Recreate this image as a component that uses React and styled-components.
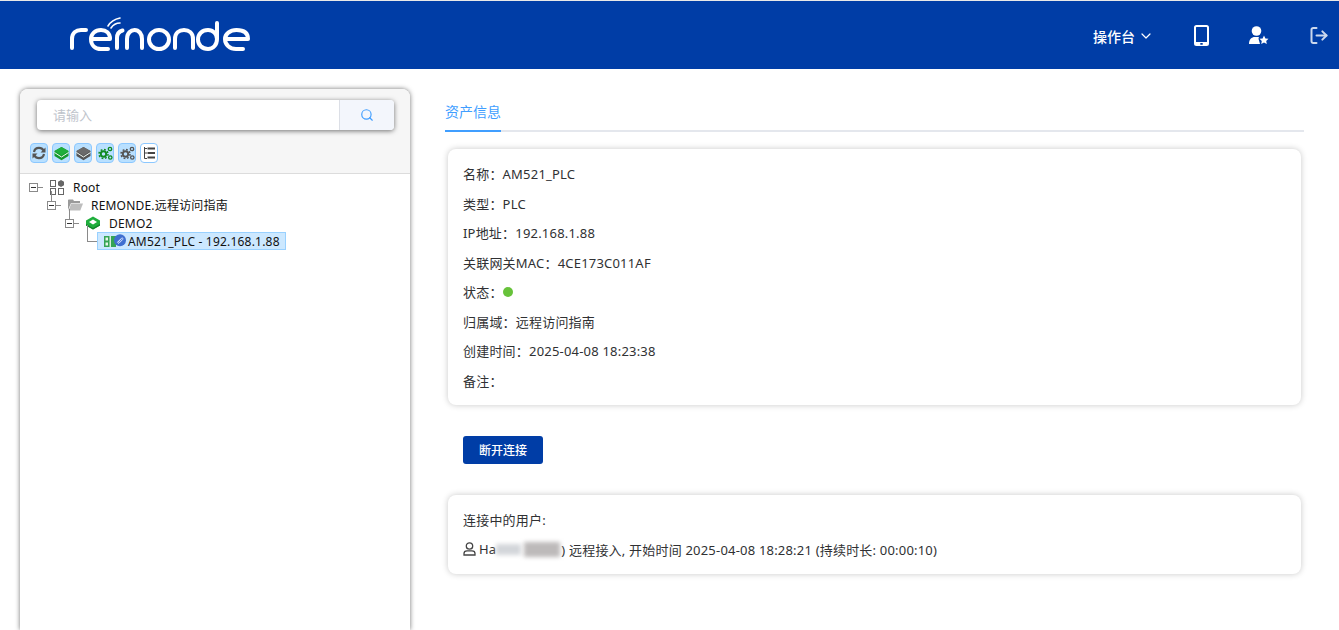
import React from 'react';
import styled, { createGlobalStyle } from 'styled-components';
import { ChevronDown, Search, LogOut } from 'lucide-react';

const GlobalStyle = createGlobalStyle`
  html, body {
    margin: 0;
    height: 100%;
    overflow: hidden;
    background: #fff;
    font-family: "Noto Sans", "Noto Sans CJK SC", sans-serif;
    color: #303133;
  }
`;

const HeaderBar = styled.header`
  display: flex;
  align-items: center;
  justify-content: space-between;
  height: 68px;
  border-top: 1px solid #e8e8e8;
  padding: 0 10px 0 68px;
  background: #003da6;
`;

const HeaderNav = styled.nav`
  display: flex;
  align-items: center;
  color: #fff;
`;

const NavMenu = styled.span`
  display: flex;
  align-items: center;
  gap: 3px;
  margin-right: 37px;
  padding-top: 2px;
  font-size: 14px;
  font-weight: 500;
`;

const NavIcon = styled.span`
  display: flex;
  width: 20px;
  justify-content: center;
  margin-left: ${p => p.$gap || 0}px;
  opacity: ${p => p.$dim ? 0.8 : 1};
`;

const Main = styled.main`
  display: flex;
  gap: 35px;
  padding: 20px 35px 0 20px;
`;

const TreePanel = styled.aside`
  flex: 0 0 390px;
  height: 541px;
  border-radius: 8px 8px 0 0;
  background: #fff;
  box-shadow: 0 0 5px rgba(0, 0, 0, 0.55);
  overflow: hidden;
`;

const PanelTop = styled.div`
  padding: 11px 16px 10px 10px;
  background: #f6f6f6;
  border-bottom: 1px solid #dcdcdc;
`;

const SearchBox = styled.div`
  display: flex;
  height: 30px;
  margin: 0 0 13px 7px;
  border-radius: 4px;
  background: #fff;
  box-shadow: 0 1px 5px rgba(0, 0, 0, 0.55);
  overflow: hidden;
`;

const SearchInput = styled.div`
  flex: 1;
  padding-left: 16px;
  font-size: 13px;
  line-height: 30px;
  color: #c0c4cc;
`;

const SearchButton = styled.div`
  display: flex;
  align-items: center;
  justify-content: center;
  width: 54px;
  border-left: 1px solid #dcdfe6;
  background: #f3f6fc;
  color: #409eff;
`;

const Toolbar = styled.div`
  display: flex;
  gap: 4px;
`;

const ToolButton = styled.span`
  display: flex;
  align-items: center;
  justify-content: center;
  box-sizing: border-box;
  width: 18px;
  height: 20px;
  border: 1px solid #8cc8ff;
  border-radius: 4px;
  background: ${p => p.$plain ? '#fff' : '#b9e0ff'};
`;

const Tree = styled.div`
  padding: 4px 0 0 9px;
`;

const TreeRow = styled.div`
  display: flex;
  align-items: center;
  position: relative;
  height: 18px;
  padding-left: ${p => p.$level * 18}px;
  font-size: 12px;
  letter-spacing: 0.2px;
  color: #111;
  white-space: nowrap;
`;

const Expander = styled.span`
  display: flex;
  align-items: center;
  justify-content: center;
  position: relative;
  box-sizing: border-box;
  width: 9px;
  height: 9px;
  margin-right: 11px;
  border: 1px solid #8a8a8a;
  background: #fff;

  &::before {
    content: '';
    width: 5px;
    height: 1px;
    background: #333;
  }

  &::after {
    content: '';
    position: absolute;
    left: 8px;
    top: 3px;
    width: 5px;
    height: 1px;
    background: #8a8a8a;
  }
`;

const Branch = styled.span`
  position: absolute;
  left: ${p => p.$left}px;
  bottom: ${p => p.$bottom}px;
  width: ${p => p.$width}px;
  height: ${p => p.$height}px;
  border-left: 1px solid #8a8a8a;
  border-bottom: ${p => p.$width ? '1px solid #8a8a8a' : 'none'};
`;

const TreeIcon = styled.span`
  display: flex;
  width: 16px;
  justify-content: center;
  margin-right: 8px;
`;

const SelectedNode = styled.span`
  display: flex;
  align-items: center;
  gap: 2px;
  box-sizing: border-box;
  height: 18px;
  margin-left: 14px;
  padding: 0 5px 0 6px;
  border: 1px solid #99d1ff;
  background: #cce8ff;
`;

const Content = styled.section`
  flex: 1;
  padding-top: 3px;
`;

const TabHeader = styled.div`
  height: 38px;
  border-bottom: 2px solid #e4e7ed;
  margin-bottom: 17px;
`;

const Tab = styled.span`
  display: inline-block;
  height: 38px;
  border-bottom: 2px solid #409eff;
  font-size: 14px;
  line-height: 40px;
  color: #409eff;
`;

const Card = styled.div`
  margin: 0 3px;
  padding: 10px 15px;
  border-radius: 8px;
  background: #fff;
  box-shadow: 0 0 6px rgba(0, 0, 0, 0.22);
`;

const InfoRow = styled.div`
  display: flex;
  align-items: center;
  height: 29.5px;
  font-size: 13px;
  letter-spacing: 0.2px;
  color: #303133;
  white-space: pre;
`;

const StatusDot = styled.span`
  width: 10px;
  height: 10px;
  border-radius: 50%;
  background: #67c23a;
`;

const DisconnectButton = styled.button`
  display: block;
  width: 80px;
  height: 28px;
  margin: 31px 0 31px 18px;
  padding: 0;
  border: 0;
  border-radius: 3px;
  background: #003da6;
  color: #fff;
  font: 500 12px "Noto Sans", "Noto Sans CJK SC", sans-serif;
`;

const Blur = styled.span`
  display: inline-block;
  width: ${p => p.$width}px;
  height: ${p => p.$height}px;
  margin-right: ${p => p.$gap}px;
  background: ${p => p.$color};
  filter: blur(2px);
`;

const UserIcon = styled.svg`
  margin-right: 3px;
`;

function Logo() {
  return (
    <svg width="184" height="36" viewBox="68 16 184 36" fill="none" stroke="#fff" strokeWidth="4" strokeLinecap="round" strokeLinejoin="round">
      <path d="M72 47V38C72 32 76 29 81 29H86" />
      <path d="M92 38H110C110 32 106 29 101 29C95 29 91 33 91 38C91 44 95 48 101 48H108" />
      <path d="M117 47V37C117 33 119 30.500 122.500 29.500" />
      <path d="M127 47V38C127 32 131 29 134.500 29C139 29 142 33 142 38V47" />
      <path d="M149 38.500A10 9.500 0 1 0 169 38.500A10 9.500 0 1 0 149 38.500Z" />
      <path d="M175 47V38C175 32 179 29 184 29C189 29 193 32 193 38V47" />
      <path d="M217 22V38C217 44 213 48 208 48C202 48 198 44 198 38.500C198 33 202 29 208 29C213 29 217 33 217 38" />
      <path d="M225 38H248C248 32 244 29 236.500 29C230 29 225 33 225 38C225 44 230 48 236 48H243" />
      <path d="M111 27C113 24 116 22 120 22M108 25C111 20 115 18 120 17" strokeWidth="1.600" />
    </svg>
  );
}

function PhoneIcon() {
  return (
    <svg width="15" height="21" viewBox="0 0 15 21">
      <path fill="#fff" fillRule="evenodd" d="M2.500 0h10A2.500 2.500 0 0 1 15 2.500v16a2.500 2.500 0 0 1-2.500 2.500h-10A2.500 2.500 0 0 1 0 18.500v-16A2.500 2.500 0 0 1 2.500 0zM2 2.500V17h11V2.500a.5.5 0 0 0-.5-.5h-10a.5.5 0 0 0-.5.5zM6.300 18h2.400v1.800H6.300z" />
    </svg>
  );
}

function UserStarIcon() {
  return (
    <svg width="20" height="19" viewBox="0 0 20 19" fill="#fff">
      <circle cx="7.500" cy="5" r="4.800" />
      <path d="M0 18c0-4.500 2.500-7 6-7h4c-.5 1-.5 2-.2 2.800L11 18z" />
      <path d="M15 9.500l1.400 2.900 3.100.4-2.300 2.200.6 3.100-2.800-1.500-2.800 1.500.6-3.100-2.300-2.200 3.100-.4z" />
    </svg>
  );
}

function CubeIcon() {
  return (
    <svg width="14" height="14" viewBox="0 0 14 14">
      <path fill="#1fae3c" d="M7 .5L14 4.500V9.500L7 13.500L0 9.500V4.500Z" />
      <path fill="#12842a" d="M0 8L7 12L14 8V9.500L7 13.500L0 9.500Z" />
      <path fill="#fff" d="M7 3.500L11 6L7 8.500L3 6Z" />
    </svg>
  );
}

function SlabIcon({ color, edge }) {
  return (
    <svg width="15" height="15" viewBox="0 0 15 15">
      <path fill={edge} d="M.5 5L7.500 1L14.500 5V10L7.500 14.300L.5 10Z" />
      <path fill={color} d="M7.500 1L14.500 5L7.500 9.500L.5 5Z" />
      <path fill="none" stroke="#f2fbf4" strokeWidth="1" d="M.5 6.500L7.500 11L14.500 6.500" />
    </svg>
  );
}

function GearsIcon({ color }) {
  return (
    <svg width="15" height="15" viewBox="0 0 15 15" fill="none" stroke={color}>
      <circle cx="5.500" cy="8" r="4.500" strokeWidth="1.500" strokeDasharray="1.800 1.730" />
      <circle cx="5.500" cy="8" r="2.700" strokeWidth="1.900" />
      <circle cx="12" cy="3" r="1.700" strokeWidth="1.300" />
      <circle cx="12.300" cy="11.500" r="1.700" strokeWidth="1.300" />
    </svg>
  );
}

function RefreshIcon() {
  return (
    <svg width="14" height="14" viewBox="0 0 14 14" fill="none" stroke="#555" strokeWidth="2.200">
      <path d="M11.500 4.500C10.500 2.500 9 1.800 7 1.800C4.500 1.800 2.500 3.500 2 6" />
      <path d="M2.500 9.500C3.500 11.500 5 12.200 7 12.200C9.500 12.200 11.500 10.500 12 8" />
      <path fill="#555" stroke="none" d="M13.500 1.500V6.500H8.500ZM.5 12.500V7.500H5.500Z" />
    </svg>
  );
}

function ListIcon() {
  return (
    <svg width="14" height="14" viewBox="0 0 14 14" fill="none" stroke="#444">
      <path d="M2.500 1V12.500H5M2.500 7H5M2.500 2.500H5" />
      <path d="M5.500 2.500H13M5.500 7H13M5.500 11.500H13" strokeWidth="2" />
    </svg>
  );
}

function RootIcon() {
  return (
    <svg width="14" height="15" viewBox="0 0 14 15" fill="none" stroke="#666">
      <rect x="0.500" y="0.500" width="5" height="6" />
      <rect x="0.500" y="8.500" width="5" height="6" />
      <rect x="8.500" y="8.500" width="5" height="6" />
      <path fill="#666" stroke="none" d="M11 0L14 1.800V5.200L11 7L8 5.200V1.800Z" />
    </svg>
  );
}

function FolderIcon() {
  return (
    <svg width="15" height="12" viewBox="0 0 15 12">
      <path fill="#9a9a9a" d="M0 1.500C0 .8.500.5 1 .5H5L6 2H12V4H3L0 11Z" />
      <path fill="#bdbdbd" d="M3.200 4.500H15L12.300 11.500H.5Z" />
    </svg>
  );
}

function DeviceIcon() {
  return (
    <svg width="22" height="14" viewBox="0 0 22 14">
      <rect x="0" y="2" width="12" height="11" fill="#35a455" />
      <rect x="1.500" y="3.500" width="2.500" height="3" fill="#e8f5e8" />
      <rect x="1.500" y="8.500" width="2.500" height="3" fill="#e8f5e8" />
      <rect x="5.500" y="2" width="1.500" height="11" fill="#d5eed8" />
      <circle cx="16" cy="6.200" r="6" fill="#3f6fd0" />
      <path fill="none" stroke="#dbe6ff" strokeWidth="1" d="M13.500 8.200L17.500 4.200C18.500 3.200 19.500 4.700 18.500 5.700L15 9.200C14 9.700 13.500 8.700 14 8.200L17 5.200" />
    </svg>
  );
}

const infoRows = [
  ['名称：', 'AM521_PLC'],
  ['类型：', 'PLC'],
  ['IP地址：', '192.168.1.88'],
  ['关联网关MAC：', '4CE173C011AF'],
  ['状态：', <StatusDot key="dot" />],
  ['归属域：', '远程访问指南'],
  ['创建时间：', '2025-04-08 18:23:38'],
  ['备注：', ''],
];

export default function App() {
  return (
    <>
      <GlobalStyle />
      <HeaderBar>
        <Logo />
        <HeaderNav>
          <NavMenu>操作台 <ChevronDown size={16} strokeWidth={1.8} /></NavMenu>
          <NavIcon><PhoneIcon /></NavIcon>
          <NavIcon $gap={38}><UserStarIcon /></NavIcon>
          <NavIcon $gap={40} $dim><LogOut size={21} strokeWidth={2.4} /></NavIcon>
        </HeaderNav>
      </HeaderBar>
      <Main>
        <TreePanel>
          <PanelTop>
            <SearchBox>
              <SearchInput>请输入</SearchInput>
              <SearchButton><Search size={14} strokeWidth={2} /></SearchButton>
            </SearchBox>
            <Toolbar>
              <ToolButton><RefreshIcon /></ToolButton>
              <ToolButton><SlabIcon color="#1fae3c" edge="#14992e" /></ToolButton>
              <ToolButton><SlabIcon color="#6a6a6a" edge="#555" /></ToolButton>
              <ToolButton><GearsIcon color="#0f8a20" /></ToolButton>
              <ToolButton><GearsIcon color="#555" /></ToolButton>
              <ToolButton $plain><ListIcon /></ToolButton>
            </Toolbar>
          </PanelTop>
          <Tree>
            <TreeRow $level={0}>
              <Expander />
              <TreeIcon><RootIcon /></TreeIcon>
              Root
            </TreeRow>
            <TreeRow $level={1}>
              <Branch $left={22} $bottom={13} $height={10} />
              <Expander />
              <TreeIcon><FolderIcon /></TreeIcon>
              REMONDE.远程访问指南
            </TreeRow>
            <TreeRow $level={2}>
              <Branch $left={40} $bottom={13} $height={10} />
              <Expander />
              <TreeIcon><CubeIcon /></TreeIcon>
              DEMO2
            </TreeRow>
            <TreeRow $level={3}>
              <Branch $left={58} $bottom={8} $height={16} $width={9} />
              <SelectedNode>
                <DeviceIcon />
                AM521_PLC - 192.168.1.88
              </SelectedNode>
            </TreeRow>
          </Tree>
        </TreePanel>
        <Content>
          <TabHeader><Tab>资产信息</Tab></TabHeader>
          <Card>
            {infoRows.map(([label, value]) => (
              <InfoRow key={label}>{label}{value}</InfoRow>
            ))}
          </Card>
          <DisconnectButton>断开连接</DisconnectButton>
          <Card>
            <InfoRow>连接中的用户:</InfoRow>
            <InfoRow>
              <UserIcon width="13" height="14" viewBox="0 0 13 14" fill="none" stroke="#444" strokeWidth="1.300">
                <circle cx="6.500" cy="4" r="3.200" />
                <path d="M1 13V11.500C1 9.800 2.500 8.800 4 8.800H9C10.500 8.800 12 9.800 12 11.500V13Z" />
              </UserIcon>
              Ha
              <Blur $width={25} $height={11} $color="#d3d6da" $gap={3} />
              <Blur $width={36} $height={15} $color="#bdbaba" $gap={1} />
              ) 远程接入, 开始时间 2025-04-08 18:28:21 (持续时长: 00:00:10)
            </InfoRow>
          </Card>
        </Content>
      </Main>
    </>
  );
}
